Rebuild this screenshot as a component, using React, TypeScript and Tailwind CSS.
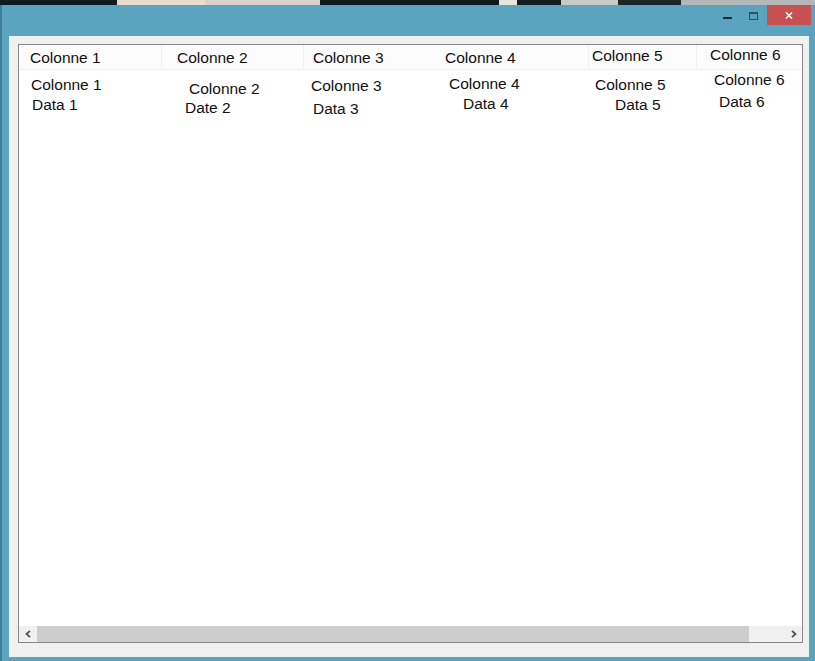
import React from "react";

type Col = {
  w: string;
  sep: boolean;
  headPad: string;
  head: string;
  l1: string;
  l1c: string;
  l2: string;
  l2c: string;
};

const cols: Col[] = [
  { w: "w-[142px]", sep: false, headPad: "pt-[4px] pl-[11px]", head: "Colonne 1", l1: "Colonne 1", l1c: "mt-[6px] ml-[12px]", l2: "Data 1", l2c: "mt-[2px] ml-[13px]" },
  { w: "w-[142px]", sep: true, headPad: "pt-[4px] pl-[15px]", head: "Colonne 2", l1: "Colonne 2", l1c: "mt-[10px] ml-[28px]", l2: "Date 2", l2c: "mt-[1px] ml-[24px]" },
  { w: "w-[134px]", sep: true, headPad: "pt-[4px] pl-[9px]", head: "Colonne 3", l1: "Colonne 3", l1c: "mt-[7px] ml-[8px]", l2: "Data 3", l2c: "mt-[5px] ml-[10px]" },
  { w: "w-[151px]", sep: false, headPad: "pt-[4px] pl-[8px]", head: "Colonne 4", l1: "Colonne 4", l1c: "mt-[5px] ml-[12px]", l2: "Data 4", l2c: "mt-[2px] ml-[26px]" },
  { w: "w-[108px]", sep: true, headPad: "pt-[2px] pl-[3px]", head: "Colonne 5", l1: "Colonne 5", l1c: "mt-[6px] ml-[7px]", l2: "Data 5", l2c: "mt-[2px] ml-[27px]" },
  { w: "flex-1", sep: true, headPad: "pt-[1px] pl-[13px]", head: "Colonne 6", l1: "Colonne 6", l1c: "mt-[1px] ml-[18px]", l2: "Data 6", l2c: "mt-[4px] ml-[23px]" },
];

export default function App() {
  return (
    <div className="w-[815px] h-[661px] flex flex-col overflow-hidden bg-[#0e1a1e] [font-family:'Liberation_Sans',Arial,sans-serif] text-[15.5px] leading-[18px] text-[#111]">
      {/* wallpaper strip */}
      <div className="h-[5px] flex shrink-0">
        <div className="w-[117px] bg-[#0f1c20]" />
        <div className="w-[88px] bg-[#e9dccb]" />
        <div className="w-[115px] bg-[#d9d2c8]" />
        <div className="w-[179px] bg-[#101a1d]" />
        <div className="w-[18px] bg-[#e6e4df]" />
        <div className="w-[44px] bg-[#131d20]" />
        <div className="w-[57px] bg-[#c9c9c6]" />
        <div className="w-[63px] bg-[#1b2427]" />
        <div className="flex-1 bg-[#b5b8b8]" />
      </div>

      {/* window */}
      <div className="flex-1 flex flex-col bg-[#5ba4bf] border-l-[2px] border-[#3f7f96]">
        {/* title bar */}
        <div className="h-[31px] shrink-0 flex justify-end items-start">
          <div className="mt-[12px] w-[9px] h-[2px] bg-[#1d2b31]" />
          <div className="ml-[17px] mt-[7px] w-[9px] h-[8px] border border-[#2d5262] border-t-2" />
          <div className="ml-[9px] mr-[4px] w-[44px] h-[20px] bg-[#c75050] flex items-center justify-center">
            <svg width="8" height="7" viewBox="0 0 8 7">
              <path d="M1 0.5 L7 6.5 M7 0.5 L1 6.5" stroke="#ffffff" strokeWidth="1.6" />
            </svg>
          </div>
        </div>

        {/* client area */}
        <div className="flex-1 ml-[7px] mr-[6px] mb-[4px] bg-[#f0f0f0] pt-[8px] pl-[9px] pr-[6px] pb-[14px] flex flex-col">
          <div className="flex-1 border border-[#878787] bg-white flex flex-col">
            {/* header */}
            <div className="h-[25px] shrink-0 flex bg-[#fcfcfc] border-b border-[#eef1f4]">
              {cols.map((c, i) => (
                <div
                  key={i}
                  className={`${c.w} ${c.headPad} whitespace-nowrap ${c.sep ? "border-l border-[#f1f1f1]" : ""}`}
                >
                  {c.head}
                </div>
              ))}
            </div>

            {/* body */}
            <div className="flex-1 flex">
              {cols.map((c, i) => (
                <div key={i} className={`${c.w} flex flex-col items-start whitespace-nowrap`}>
                  <div className={c.l1c}>{c.l1}</div>
                  <div className={c.l2c}>{c.l2}</div>
                </div>
              ))}
            </div>

            {/* horizontal scrollbar */}
            <div className="h-[16px] shrink-0 flex bg-[#f0f0f0]">
              <div className="w-[18px] flex items-center justify-center">
                <svg width="6" height="8" viewBox="0 0 6 8">
                  <path d="M5 0.8 L1.5 4 L5 7.2" fill="none" stroke="#505050" strokeWidth="1.8" />
                </svg>
              </div>
              <div className="w-[712px] bg-[#cdcdcd]" />
              <div className="flex-1" />
              <div className="w-[17px] flex items-center justify-center">
                <svg width="6" height="8" viewBox="0 0 6 8">
                  <path d="M1 0.8 L4.5 4 L1 7.2" fill="none" stroke="#505050" strokeWidth="1.8" />
                </svg>
              </div>
            </div>
          </div>
        </div>
      </div>
    </div>
  );
}
